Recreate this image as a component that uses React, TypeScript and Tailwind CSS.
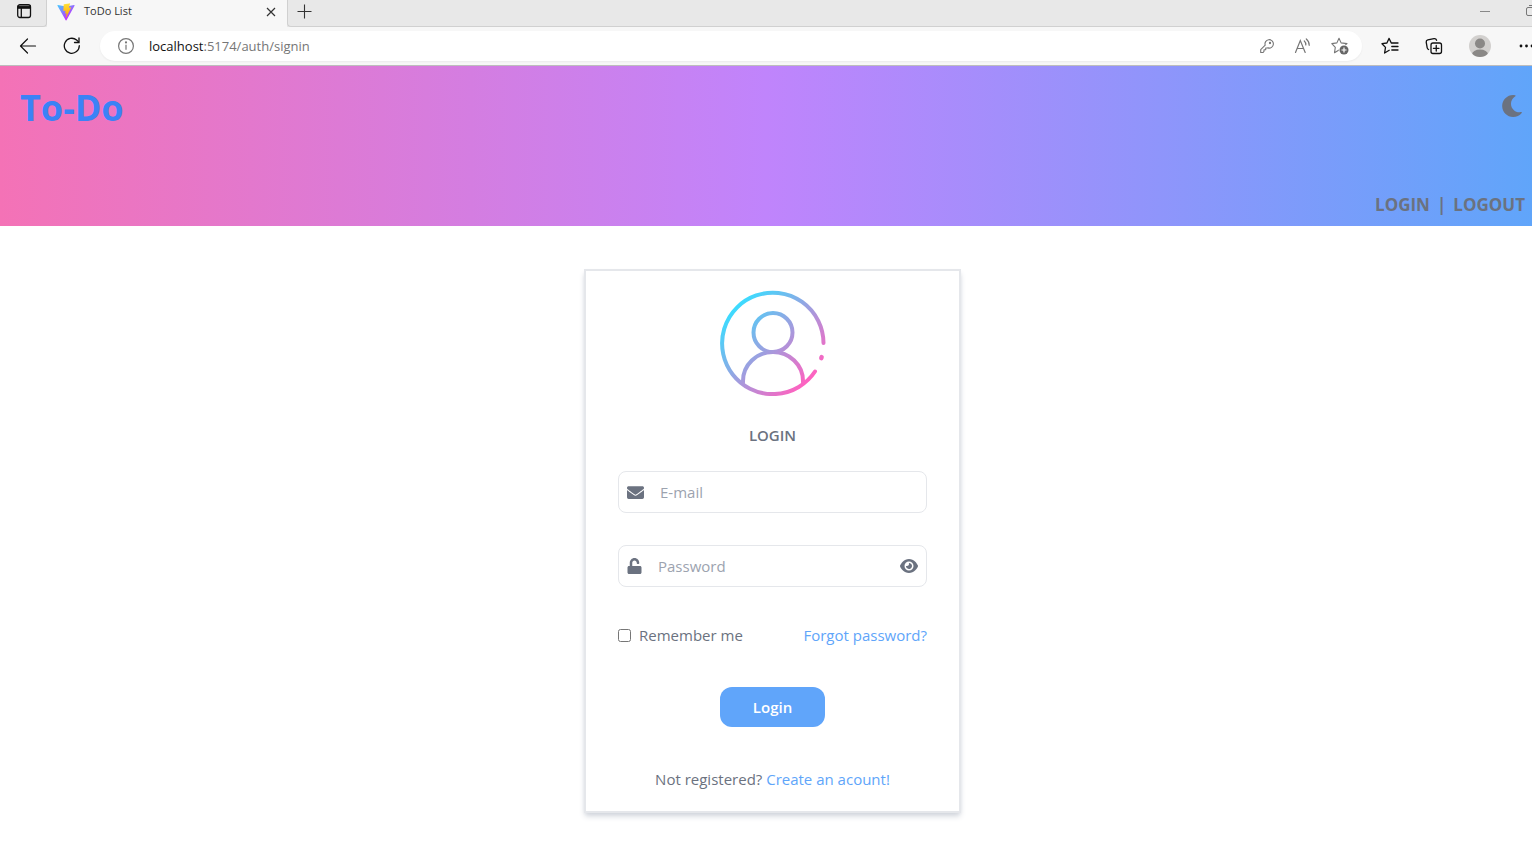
import { useState } from "react";
import { FaEnvelope, FaMoon, FaUnlock } from "react-icons/fa";
import { FaEye } from "react-icons/fa6";

function TabsIcon() {
  return (
    <svg width="16" height="16" viewBox="0 0 16 16" fill="none" stroke="#111" strokeWidth="1.3">
      <rect x="1.7" y="1.7" width="12.8" height="12.8" rx="2.2" />
      <path d="M2 3.2h12v2H2z" fill="#111" />
      <path d="M5.3 5v9.300" />
    </svg>
  );
}

function ViteLogo() {
  return (
    <svg width="18" height="18" viewBox="0 0 410 404" fill="none">
      <defs>
        <linearGradient id="vite-body" x1="6" y1="33" x2="235" y2="344" gradientUnits="userSpaceOnUse">
          <stop stopColor="#41D1FF" />
          <stop offset="1" stopColor="#BD34FE" />
        </linearGradient>
        <linearGradient id="vite-bolt" x1="194" y1="9" x2="236" y2="293" gradientUnits="userSpaceOnUse">
          <stop stopColor="#FFEA83" />
          <stop offset="0.08" stopColor="#FFDD35" />
          <stop offset="1" stopColor="#FFA800" />
        </linearGradient>
      </defs>
      <path
        d="M399.641 59.525L215.643 388.545C211.844 395.338 202.084 395.378 198.228 388.618L10.582 59.556C6.381 52.19 12.68 43.267 21.028 44.759L205.223 77.682C206.398 77.892 207.601 77.89 208.776 77.676L389.119 44.806C397.439 43.289 403.768 52.143 399.641 59.525Z"
        fill="url(#vite-body)"
      />
      <path
        d="M292.965 1.574L156.801 28.255C154.563 28.694 152.906 30.59 152.771 32.866L144.395 174.33C144.198 177.662 147.258 180.248 150.51 179.498L188.42 170.749C191.967 169.931 195.172 173.055 194.443 176.622L183.18 231.775C182.422 235.487 185.907 238.661 189.532 237.56L212.947 230.446C216.577 229.344 220.065 232.527 219.297 236.242L201.398 322.875C200.278 328.294 207.486 331.249 210.492 326.603L212.5 323.5L323.454 102.072C325.312 98.365 322.108 94.137 318.036 94.923L279.014 102.454C275.347 103.161 272.227 99.746 273.262 96.158L298.731 7.867C299.767 4.273 296.636 0.855 292.965 1.574Z"
        fill="url(#vite-bolt)"
      />
    </svg>
  );
}

function CloseIcon() {
  return (
    <svg width="10" height="10" viewBox="0 0 10 10" stroke="#333" strokeWidth="1.2">
      <path d="M1 1l8 8M9 1L1 9" />
    </svg>
  );
}

function PlusIcon() {
  return (
    <svg width="15" height="15" viewBox="0 0 15 15" stroke="#333" strokeWidth="1.1">
      <path d="M7.500 .5v14M.5 7.500h14" />
    </svg>
  );
}

function BackIcon() {
  return (
    <svg width="18" height="18" viewBox="0 0 18 18" fill="none" stroke="#111" strokeWidth="1.2" strokeLinecap="round" strokeLinejoin="round">
      <path d="M16.500 9H2M8.500 2L1.500 9l7 7" />
    </svg>
  );
}

function ReloadIcon() {
  return (
    <svg width="18" height="18" viewBox="0 0 18 18" fill="none" stroke="#111" strokeWidth="1.3" strokeLinecap="round">
      <path d="M16.300 8.700A7.500 7.500 0 1 1 13.600 3l2 1.900" />
      <path d="M16 1v4.500h-4.500" />
    </svg>
  );
}

function InfoIcon() {
  return (
    <svg width="18" height="18" viewBox="0 0 18 18" fill="none" stroke="#767676" strokeWidth="1.2">
      <circle cx="9" cy="9" r="7.400" />
      <path d="M9 7.800v5" />
      <circle cx="9" cy="5.400" r=".5" fill="#767676" />
    </svg>
  );
}

function KeyIcon() {
  return (
    <svg width="16" height="16" viewBox="0 0 16 16" fill="none" stroke="#767676" strokeWidth="1.1" strokeLinejoin="round">
      <path d="M6.200 7.200A4.200 4.200 0 1 1 9 9.900L8 10H6.700v1.700H5v1.600l-.9 1.200H1.700v-2.800z" />
      <circle cx="11" cy="5" r=".6" fill="#767676" />
    </svg>
  );
}

function ReadAloudIcon() {
  return (
    <svg width="18" height="16" viewBox="0 0 18 16" fill="none" stroke="#767676" strokeWidth="1.2" strokeLinecap="round">
      <path d="M1.500 14.500L6.300 2.500l4.900 12M3.200 10.500h6.300" />
      <path d="M10.300 3q1.700 1.600 1.500 4M12.300 1q3 2.500 2.900 6.300" />
    </svg>
  );
}

const STAR = "M8 1.200l2.100 4.700 5.900.7-4.300 3.700.8 5.400L8 13l-4.500 2.700.8-5.400L.8 6.600l5.100-.7z";

function AddFavoriteIcon() {
  return (
    <svg width="18" height="18" viewBox="0 0 18 18" fill="none">
      <path d={STAR} stroke="#767676" strokeWidth="1.1" strokeLinejoin="round" />
      <circle cx="13" cy="13" r="5.300" fill="#fff" />
      <circle cx="13" cy="13" r="4.500" fill="#666" />
      <path d="M13 10.500v5M10.500 13h5" stroke="#fff" strokeWidth="1.200" />
    </svg>
  );
}

function FavoritesIcon() {
  return (
    <svg width="18" height="18" viewBox="0 0 18 18" fill="none" stroke="#111" strokeWidth="1.3" strokeLinejoin="round" strokeLinecap="round">
      <path d="M10.300 6L8 1.400 5.900 6l-4.900.7 3.500 3.700-.9 5.600 4.600-2.700M10.300 6H17M10.800 9.500H17M10.800 13H17" />
    </svg>
  );
}

function CollectionsIcon() {
  return (
    <svg width="18" height="18" viewBox="0 0 18 18" fill="none" stroke="#111" strokeWidth="1.3" strokeLinecap="round">
      <path d="M3.600 12.500Q2.500 12 2.200 10.800L1.200 5.200Q1 3.300 2.800 2.900L9 1.600q2-.3 2.600 1.700" />
      <rect x="6" y="6" width="10.500" height="10.500" rx="2" />
      <path d="M11.250 8.500v5.600M8.400 11.300h5.600" />
    </svg>
  );
}

function ProfileIcon() {
  return (
    <svg width="22" height="22" viewBox="0 0 22 22">
      <defs>
        <clipPath id="profile-disc">
          <circle cx="11" cy="11" r="11" />
        </clipPath>
      </defs>
      <g clipPath="url(#profile-disc)">
        <path fill="#d2d0ce" d="M0 0h22v22H0z" />
        <circle cx="11" cy="8.500" r="5" fill="#8a8886" />
        <ellipse cx="11" cy="19.500" rx="8" ry="5" fill="#8a8886" />
      </g>
    </svg>
  );
}

function UserPortrait() {
  return (
    <svg width="106" height="106" viewBox="0 0 106 106" fill="none" stroke="url(#portrait)" strokeWidth="4" strokeLinecap="round">
      <defs>
        <linearGradient id="portrait" x1="16" y1="16" x2="90" y2="90" gradientUnits="userSpaceOnUse">
          <stop stopColor="#3bdcff" />
          <stop offset="1" stopColor="#ff62c0" />
        </linearGradient>
      </defs>
      <path d="M103.500 53A50.700 50.700 0 1 0 95 81.500" />
      <circle cx="53" cy="42.500" r="19.500" />
      <path d="M23 92.500V91a30 29 0 0 1 60 0v1.500" />
      <path d="M101.600 67.100l-.3 1" strokeWidth="4.500" />
    </svg>
  );
}

function BrowserChrome() {
  return (
    <header className="bg-[#f7f7f7] font-['Open_Sans','Noto_Sans',sans-serif]">
      <div className="flex h-[27px] overflow-hidden bg-[#e8e8e8]">
        <button aria-label="Tab actions" className="flex h-full w-[47px] items-center justify-center rounded-br border-r border-b border-[#d0d0d0] pb-1 pl-0.5">
          <TabsIcon />
        </button>
        <div className="flex w-60 items-center bg-[#f7f7f7] pr-[11px] pb-1 pl-[10px]">
          <ViteLogo />
          <span className="ml-[9px] flex-1 text-[11px] text-[#333]">ToDo List</span>
          <button aria-label="Close tab">
            <CloseIcon />
          </button>
        </div>
        <div className="flex flex-1 items-center rounded-bl border-b border-l border-[#d0d0d0] pb-1 pl-[9px]">
          <button aria-label="New tab">
            <PlusIcon />
          </button>
          <button aria-label="Minimize" className="mr-9 ml-auto">
            <svg width="10" height="10" stroke="#888">
              <path d="M0 5.500h10" />
            </svg>
          </button>
          <button aria-label="Restore" className="w-[6px] overflow-hidden">
            <svg width="12" height="12" viewBox="0 0 12 12" fill="none" stroke="#777">
              <rect x=".5" y="2.500" width="8" height="8" rx="1.500" />
              <path d="M3 .5h6q2 0 2 2v6" />
            </svg>
          </button>
        </div>
      </div>
      <div className="flex h-[39px] items-center border-b border-[#bdbdbd] pl-[19px]">
        <button aria-label="Back">
          <BackIcon />
        </button>
        <button aria-label="Reload" className="ml-[26px]">
          <ReloadIcon />
        </button>
        <div className="ml-[19px] flex h-[30px] flex-1 items-center rounded-full bg-white pr-[13px] pl-[17px] shadow-xs">
          <InfoIcon />
          <span className="ml-[14px] flex-1 pt-0.5 text-[13px] text-[#767676]">
            <span className="text-[#111]">localhost</span>:5174/auth/signin
          </span>
          <div className="flex items-center gap-[19px]">
            <button aria-label="Passwords">
              <KeyIcon />
            </button>
            <button aria-label="Read aloud">
              <ReadAloudIcon />
            </button>
            <button aria-label="Add to favorites">
              <AddFavoriteIcon />
            </button>
          </div>
        </div>
        <div className="ml-[19px] flex items-center">
          <button aria-label="Favorites">
            <FavoritesIcon />
          </button>
          <button aria-label="Collections" className="ml-[26px]">
            <CollectionsIcon />
          </button>
          <button aria-label="Profile" className="ml-[26px]">
            <ProfileIcon />
          </button>
          <button aria-label="Settings and more" className="ml-7 w-[13px] overflow-hidden">
            <svg width="16" height="4" viewBox="0 0 16 4" fill="#111">
              <circle cx="2" cy="2" r="1.400" />
              <circle cx="7.500" cy="2" r="1.400" />
              <circle cx="13" cy="2" r="1.400" />
            </svg>
          </button>
        </div>
      </div>
    </header>
  );
}

function Banner() {
  return (
    <div className="flex h-40 justify-between bg-linear-to-r/srgb from-[#f472b6] via-[#c084fc] to-[#60a5fa] pr-[7px] pl-5">
      <h1 className="pt-[18px] text-[36px] leading-[48px] font-bold text-[#3b82f6]">To-Do</h1>
      <div className="flex flex-col items-end justify-between pt-[29px] pb-[7px] text-[#6b7280]">
        <button aria-label="Toggle dark mode" className="mr-0.5">
          <FaMoon size={22} />
        </button>
        <nav className="flex gap-[7px] text-[17px] leading-7 font-bold">
          <a href="#login">LOGIN</a>
          <span>|</span>
          <a href="#logout">LOGOUT</a>
        </nav>
      </div>
    </div>
  );
}

function LoginCard() {
  const [visible, setVisible] = useState(false);
  return (
    <form
      onSubmit={(event) => event.preventDefault()}
      className="flex w-[377px] flex-col items-center border-2 border-[#e5e7eb] px-8 pt-[19px] pb-5 text-[15px] leading-6 text-[#6b7280] shadow-md shadow-gray-300"
    >
      <UserPortrait />
      <h2 className="mt-[27px] font-semibold">LOGIN</h2>
      <label className="mt-6 flex h-[42px] w-full items-center rounded-lg border border-[#e5e7eb] px-2">
        <FaEnvelope size={17} />
        <input
          type="email"
          aria-label="E-mail"
          placeholder="E-mail"
          className="ml-4 min-w-0 flex-1 outline-none placeholder:text-[#9ca3af]"
        />
      </label>
      <div className="mt-8 flex h-[42px] w-full items-center rounded-lg border border-[#e5e7eb] px-2">
        <FaUnlock className="h-4 w-[15px]" />
        <input
          type={visible ? "text" : "password"}
          aria-label="Password"
          placeholder="Password"
          className="ml-4 min-w-0 flex-1 outline-none placeholder:text-[#9ca3af]"
        />
        <button type="button" aria-label="Show password" onClick={() => setVisible(!visible)}>
          <FaEye size={18} />
        </button>
      </div>
      <div className="mt-9 flex w-full items-center justify-between">
        <label className="flex items-center gap-2">
          <input type="checkbox" className="size-[13px]" />
          Remember me
        </label>
        <a href="#forgot" className="text-[#60a5fa]">
          Forgot password?
        </a>
      </div>
      <button type="submit" className="mt-10 rounded-xl bg-[#60a5fa] px-[33px] py-2 font-semibold text-white">
        Login
      </button>
      <p className="mt-10">
        Not registered?{" "}
        <a href="#register" className="text-[#60a5fa]">
          Create an acount!
        </a>
      </p>
    </form>
  );
}

export default function App() {
  return (
    <div className="min-h-screen overflow-hidden bg-white font-['Open_Sans','Noto_Sans',sans-serif]">
      <BrowserChrome />
      <Banner />
      <main className="flex justify-center pt-[43px] pb-8 pl-[13px]">
        <LoginCard />
      </main>
    </div>
  );
}
